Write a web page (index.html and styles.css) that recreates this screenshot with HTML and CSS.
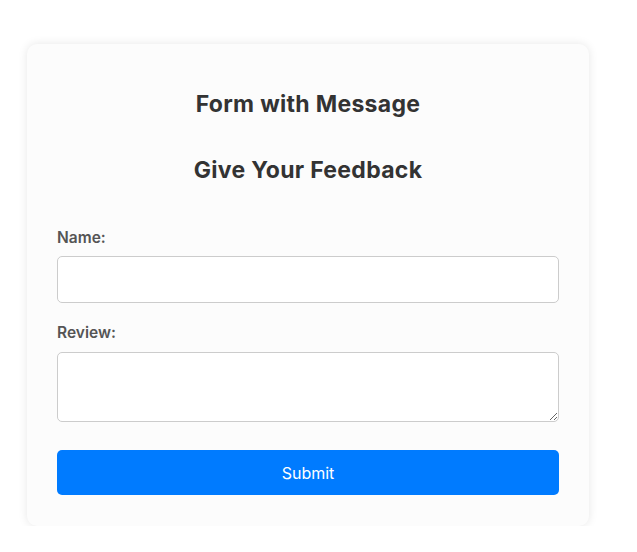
FILE: index.html
```html
<!DOCTYPE html>
<html lang="en">
<head>
<meta charset="utf-8">
<title>Form with Message</title>
<link rel="stylesheet" href="styles.css">
</head>
<body>
<div class="card">
  <h1 class="title">Form with Message</h1>
  <h2 class="title second">Give Your Feedback</h2>
  <form class="form">
    <label class="label" for="name">Name:</label>
    <input class="field" id="name" type="text">
    <label class="label" for="review">Review:</label>
    <textarea class="field area" id="review"></textarea>
    <button class="submit" type="button">Submit</button>
  </form>
</div>
</body>
</html>
```

FILE: styles.css
```css
html, body {
  margin: 0;
  padding: 0;
  background: #ffffff;
}
body {
  font-family: "Inter", "Open Sans", sans-serif;
  padding: 44px 0 0 27px;
}
.card {
  box-sizing: border-box;
  width: 562px;
  background: #fcfcfc;
  border-radius: 10px;
  box-shadow: 0 0 10px rgba(0, 0, 0, 0.1);
  padding: 30px 30px 31px;
}
.title {
  margin: 12px 0 0;
  font-size: 23px;
  line-height: 36px;
  font-weight: 700;
  color: #333333;
  text-align: center;
  letter-spacing: 0.3px;
}
.second {
  margin-top: 30px;
}
.form {
  display: flex;
  flex-direction: column;
  margin-top: 39px;
}
.label {
  font-size: 15.5px;
  line-height: 22px;
  font-weight: 600;
  color: #555555;
  margin-bottom: 7px;
}
.field {
  box-sizing: border-box;
  width: 100%;
  height: 47px;
  border: 1px solid #cccccc;
  border-radius: 5px;
  background: #ffffff;
  margin: 0 0 19px;
  padding: 10px;
  font-family: inherit;
  font-size: 15px;
}
.area {
  height: 70px;
  margin: 1px 0 28px;
  display: block;
}
.submit {
  height: 45px;
  border: 0;
  border-radius: 5px;
  background: #007bff;
  color: #ffffff;
  font-family: inherit;
  font-size: 16px;
  font-weight: 400;
}
```
